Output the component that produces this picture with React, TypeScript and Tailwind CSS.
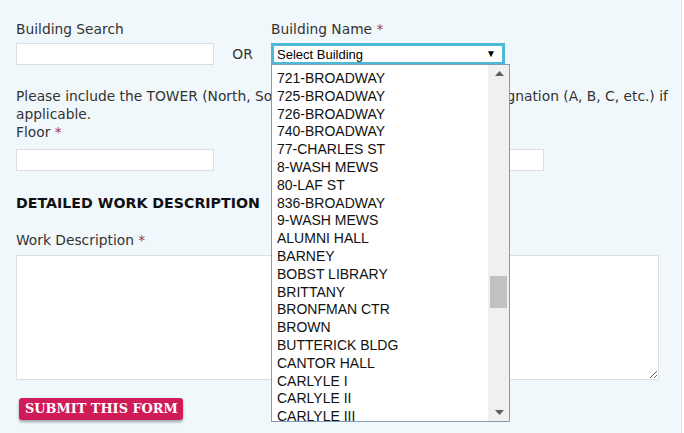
import React from "react";

const buildings = [
  "721-BROADWAY",
  "725-BROADWAY",
  "726-BROADWAY",
  "740-BROADWAY",
  "77-CHARLES ST",
  "8-WASH MEWS",
  "80-LAF ST",
  "836-BROADWAY",
  "9-WASH MEWS",
  "ALUMNI HALL",
  "BARNEY",
  "BOBST LIBRARY",
  "BRITTANY",
  "BRONFMAN CTR",
  "BROWN",
  "BUTTERICK BLDG",
  "CANTOR HALL",
  "CARLYLE I",
  "CARLYLE II",
  "CARLYLE III",
];

function Req() {
  return <span className="text-[#a8353a]"> *</span>;
}

export default function App() {
  return (
    <div className="w-[684px] h-[433px] bg-white overflow-hidden">
      <div className="relative w-[682px] h-[433px] bg-[#f1f8fb] border-r border-[#dfe7ea] pl-4 pt-[20px] font-['DejaVu_Sans',sans-serif] text-[13.8px] text-[#333]">
        {/* Row 1 */}
        <div className="flex items-end">
          <div className="w-[198px]">
            <div className="h-[18px] leading-[18px] mb-[5px]">Building Search</div>
            <div className="h-[22px] bg-white border border-[#dcdfe2]" />
          </div>
          <div className="w-[57px] h-[22px] leading-[22px] text-center">OR</div>
          <div className="relative">
            <div className="h-[18px] leading-[18px] mb-[5px]">
              Building Name
              <Req />
            </div>
            <div className="w-[234px] h-[22px] bg-white border-[3px] border-[#4cb9d6] flex items-center justify-between pl-[3px] pr-[6px] font-['Liberation_Sans',sans-serif] text-[13px] text-black">
              <span className="leading-none">Select Building</span>
              <span className="text-[10px] leading-none">▼</span>
            </div>
            {/* Dropdown list */}
            <div className="absolute left-0 top-[44px] z-10 w-[239px] h-[358px] bg-white border border-[#7f9db9] flex font-['Liberation_Sans',sans-serif] text-[14px] text-[#111]">
              <div className="flex-1 pt-[5px] pl-[5px] overflow-hidden">
                {buildings.map((b) => (
                  <div key={b} className="h-[17.8px] leading-[17.8px] whitespace-nowrap">
                    {b}
                  </div>
                ))}
              </div>
              <div className="w-[21px] h-full bg-[#f0f0f0] flex flex-col items-start">
                <div className="h-[17px] w-full flex items-center justify-center pl-[2px]">
                  <svg width="9" height="5" viewBox="0 0 9 5">
                    <path d="M0 5 L4.5 0 L9 5 Z" fill="#606060" />
                  </svg>
                </div>
                <div className="h-[194px]" />
                <div className="ml-[2px] w-[17px] h-[32px] bg-[#c1c1c1]" />
                <div className="flex-1" />
                <div className="h-[17px] w-full flex items-center justify-center pl-[2px]">
                  <svg width="9" height="5" viewBox="0 0 9 5">
                    <path d="M0 0 L9 0 L4.5 5 Z" fill="#606060" />
                  </svg>
                </div>
              </div>
            </div>
          </div>
        </div>

        {/* Instruction + Floor */}
        <div className="mt-[23px] w-[664px] leading-[17.5px]">
          Please include the TOWER (North, South, East, West) and/or WING designation (A, B, C, etc.) if applicable.
        </div>
        <div className="flex">
          <div className="w-[256px]">
            <div className="h-[18px] leading-[18px] mb-[8px]">
              Floor
              <Req />
            </div>
            <div className="w-[198px] h-[22px] bg-white border border-[#dcdfe2]" />
          </div>
          <div>
            <div className="h-[18px] leading-[18px] mb-[8px]">
              Room
              <Req />
            </div>
            <div className="w-[272px] h-[22px] bg-white border border-[#dcdfe2]" />
          </div>
        </div>

        <div className="mt-[23px] h-[18px] leading-[18px] font-bold text-[14.2px] text-[#111]">DETAILED WORK DESCRIPTION</div>

        <div className="mt-[19px] h-[18px] leading-[18px] mb-[6px]">
          Work Description
          <Req />
        </div>
        <textarea className="block w-[643px] h-[125px] bg-white border border-[#dcdfe2] outline-none" />

        <button className="mt-[18px] ml-[3px] h-[22px] pl-[6px] pr-[5px] rounded-[3px] bg-[#cf1b58] text-white font-bold text-[12.9px] font-['DejaVu_Serif',serif] shadow-[0_2px_3px_rgba(0,0,0,0.35)] leading-[22px]">
          SUBMIT THIS FORM
        </button>
      </div>
    </div>
  );
}
